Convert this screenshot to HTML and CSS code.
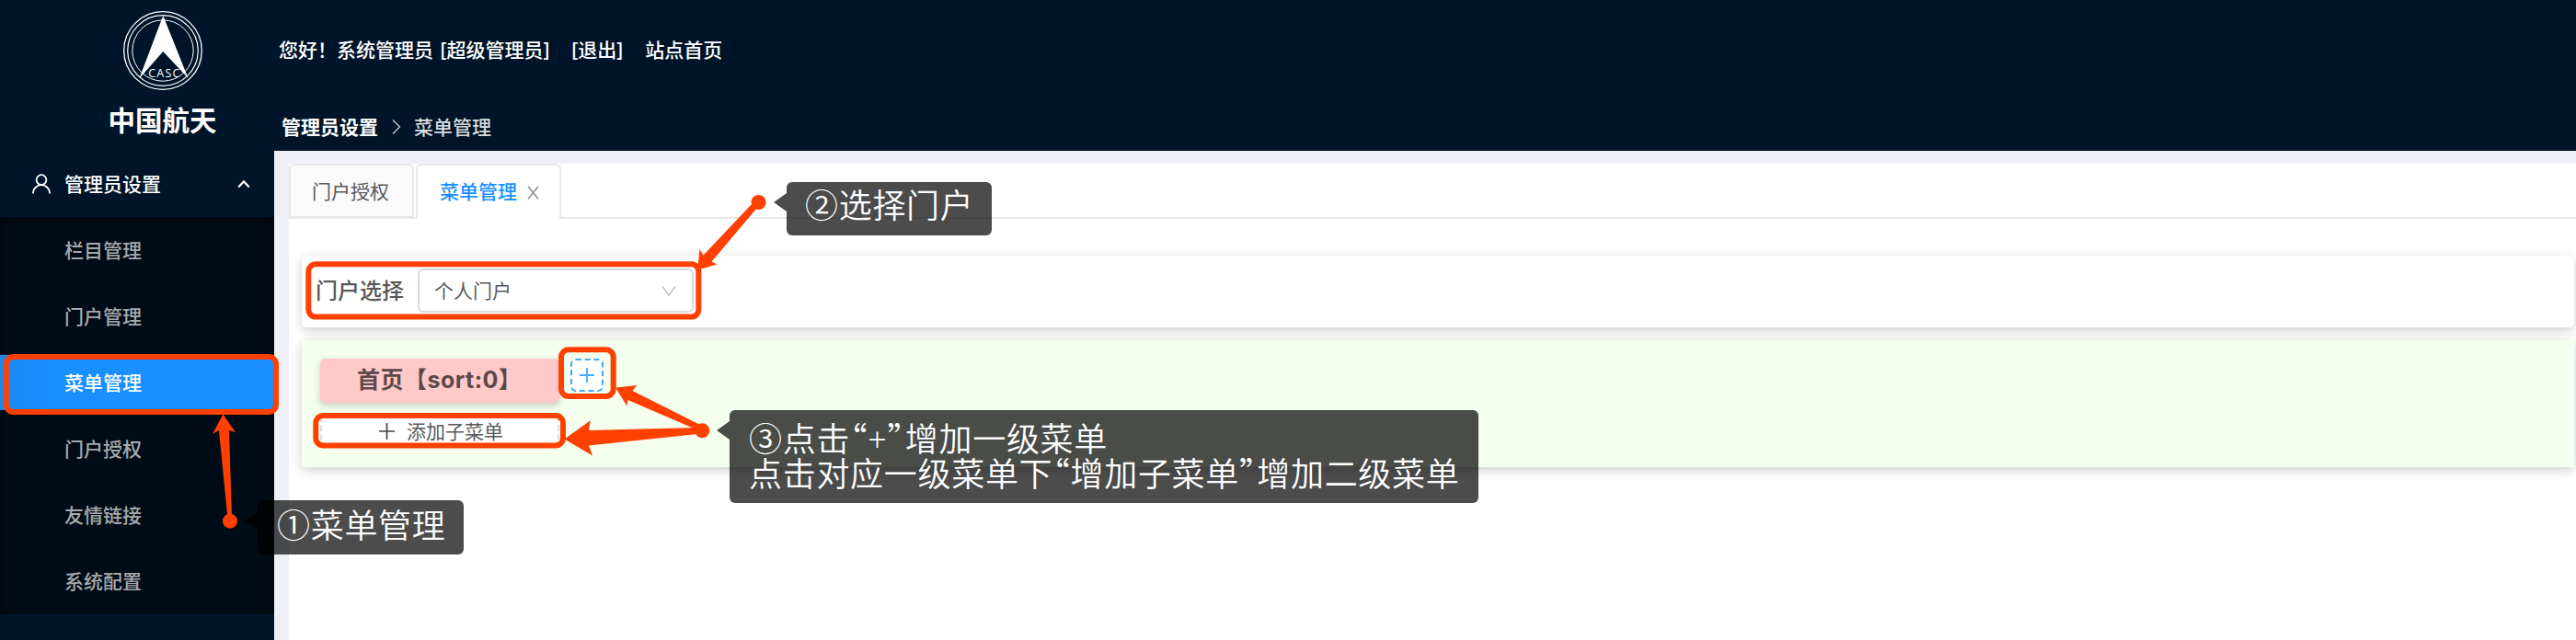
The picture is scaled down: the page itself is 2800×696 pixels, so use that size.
FILE: index.html
```
<!DOCTYPE html>
<html lang="zh-CN">
<head>
<meta charset="utf-8">
<title>菜单管理</title>
<link rel="stylesheet" href="styles.css">
</head>
<body>
<div class="app">
  <aside class="sidebar">
    <div class="brand">
      <svg class="brand-logo" width="88" height="88" viewBox="0 0 88 88">
        <g fill="none" stroke="#fff">
          <circle cx="44" cy="44" r="42.3" stroke-width="1.3"/>
          <circle cx="44" cy="44" r="38.3" stroke-width="1.2"/>
          <circle cx="44" cy="44" r="33.2" stroke-width="1"/>
        </g>
        <path d="M44.3 6 L71.5 74 L44.3 45 L18.3 74.5 Z" fill="#fff"/>
        <text class="brand-code" x="45.3" y="72.7" text-anchor="middle" textLength="34">CASC</text>
      </svg>
      <div class="brand-name">中国航天</div>
    </div>
    <div class="menu-title">
      <svg width="20" height="22" viewBox="0 0 20 22" fill="none" stroke="#fff" stroke-width="1.8"><circle cx="10" cy="6.6" r="5.4"/><path d="M1 21.5v-1.2c.5-4.600 4.400-8.200 9-8.200s8.500 3.600 9 8.200v1.200"/></svg>
      <span>管理员设置</span>
      <svg class="menu-arrow" width="14" height="10" viewBox="0 0 14 10" fill="none" stroke="#fff" stroke-width="2.200"><path d="M1.200 8.500 L7 2.300 L12.800 8.500"/></svg>
    </div>
    <nav class="submenu">
      <a class="item">栏目管理</a>
      <a class="item">门户管理</a>
      <a class="item active">菜单管理</a>
      <a class="item">门户授权</a>
      <a class="item">友情链接</a>
      <a class="item">系统配置</a>
    </nav>
  </aside>
  <main class="main">
    <header class="header">
      <div class="userbar">
        <span>您好！系统管理员 <span class="role">[超级管理员]</span></span>
        <a>[退出]</a>
        <a>站点首页</a>
      </div>
      <div class="breadcrumb">
        <b>管理员设置</b>
        <svg width="10" height="18" viewBox="0 0 10 18" fill="none" stroke="#c4cad0" stroke-width="1.300"><path d="M1 1.500 L8.500 9 L1 16.500"/></svg>
        <span>菜单管理</span>
      </div>
    </header>
    <section class="content">
      <div class="tabs">
        <div class="tab">门户授权</div>
        <div class="tab current">菜单管理
          <svg width="13" height="15" viewBox="0 0 13 15" fill="none" stroke="#8c8c8c" stroke-width="1.500"><path d="M1 .8 L12 14.200 M12 .8 L1 14.200"/></svg>
        </div>
      </div>
      <div class="card filter">
        <label>门户选择</label>
        <div class="select">
          <span>个人门户</span>
          <svg width="16" height="13" viewBox="0 0 16 13" fill="none" stroke="#bfbfbf" stroke-width="1.500"><path d="M1 1.500 L8 11 L15 1.500"/></svg>
        </div>
      </div>
      <div class="card board">
        <div class="column">
          <div class="node">首页【sort:0】</div>
          <div class="add-child">
            <svg width="17" height="18" viewBox="0 0 17 18" fill="none" stroke="#444" stroke-width="1.700"><path d="M8.500 0v18M0 9h17"/></svg>
            <span>添加子菜单</span>
          </div>
        </div>
        <div class="add-root">
          <svg width="16" height="16" viewBox="0 0 16 16" fill="none" stroke="#40a9ff" stroke-width="1.800"><path d="M8 0v16M0 8h16"/></svg>
        </div>
      </div>
    </section>
  </main>

  <svg class="marks" width="2800" height="696" viewBox="0 0 2800 696">
    <path d="M345 454h3v29h-3z M608 454h3v29h-3z" fill="#fff"/>
    <g fill="none" stroke="#ff4000" stroke-width="6">
      <rect x="6.700" y="388" width="293.300" height="60" rx="8"/>
      <rect x="335.300" y="287.300" width="424" height="57.300" rx="8"/>
      <rect x="610" y="380.300" width="56.700" height="50.700" rx="8"/>
      <rect x="343.300" y="452" width="268.700" height="32.500" rx="8"/>
    </g>
    <g fill="#ff4000">
      <path d="M242.500 450.500 L256 470.300 L249 468 L252 562 L247.300 562 L238 468 L231 472 Z"/>
      <circle cx="250" cy="566.700" r="8"/>
      <path d="M758 293.500 L760.500 271 L764.500 277.500 L818 221 L823 226 L773.500 284.500 L779.500 287.500 Z"/>
      <circle cx="824.500" cy="220" r="8"/>
      <path d="M669 421.500 L692.300 419 L687.500 425 L762 462.500 L759 468 L682.500 435 L681.500 441.500 Z"/>
      <path d="M613.500 477.500 L641.700 457.300 L640 468 L758 465 L758 472 L640 484.500 L644 495.500 Z"/>
      <circle cx="763.300" cy="468.300" r="8"/>
    </g>
  </svg>
  <div class="tip tip-menu">①菜单管理</div>
  <div class="tip tip-portal">②选择门户</div>
  <div class="tip tip-add">③点击<q>+</q>增加一级菜单<br>点击对应一级菜单下<q>增加子菜单</q>增加二级菜单</div>
</div>
</body>
</html>
```
FILE: styles.css
```
* { box-sizing: border-box; }
body {
  margin: 0;
  font: 400 21px/30px "Noto Sans", "Noto Sans CJK SC", sans-serif;
  color: #595959;
}
svg { display: block; flex: none; }
.app {
  position: relative;
  display: flex;
  width: 2800px;
  height: 696px;
  overflow: hidden;
  background: #001529;
}

/* Sidebar */
.sidebar { width: 298px; flex: none; color: #fff; }
.brand {
  height: 164px;
  padding: 11px 0 0 56px;
  display: flex;
  flex-direction: column;
  align-items: center;
}
.brand-code { font: 400 12.5px "Open Sans", sans-serif; fill: #fff; }
.brand-name { font-size: 29.500px; font-weight: 700; line-height: 40px; margin: 12px 1px 0 0; }
.menu-title {
  height: 72px;
  display: flex;
  align-items: center;
  padding: 0 26px 0 35px;
  font-weight: 500;
}
.menu-title span { margin-left: 15px; }
.menu-arrow { margin-left: auto; }
.submenu {
  height: 432px;
  padding: 6px 0;
  display: flex;
  flex-direction: column;
  gap: 12px;
  background: #000c17;
  box-shadow: inset 0 3px 12px rgba(0, 0, 0, .45);
}
.item {
  height: 60px;
  line-height: 60px;
  padding-left: 70px;
  font-weight: 500;
  color: #a6aaae;
}
.item.active { color: #fff; background: linear-gradient(90deg, #1a86ed, #1890ff 55px); }

/* Header */
.main { flex: 1; min-width: 0; display: flex; flex-direction: column; }
.header { height: 164px; color: #fff; padding: 39px 0 0 5px; }
.userbar { display: flex; gap: 24px; font-weight: 500; }
.role { margin-left: 2px; }
.breadcrumb { display: flex; align-items: center; margin: 54px 0 0 3px; }
.breadcrumb svg { margin: 0 14px 0 15px; }
.breadcrumb span { color: #d9dcdf; font-weight: 500; }

/* Content */
.content {
  flex: 1;
  background: #fff;
  border: solid #eff0f5;
  border-width: 14px 0 0 16px;
}
.tabs { height: 60px; display: flex; gap: 2px; border-bottom: 2px solid #e8e8e8; }
.tab {
  display: flex;
  align-items: center;
  height: 59px;
  width: 136px;
  padding: 0 0 0 23px;
  border: 2px solid #e8e8e8;
  border-radius: 6px 6px 0 0;
  background: #fafafa;
}
.tab.current {
  height: 60px;
  width: 158px;
  padding: 0 0 2px 24px;
  border-bottom: 0;
  background: #fff;
  color: #1890ff;
  font-weight: 500;
}
.tab svg { margin: 2px 0 0 11px; }
.card {
  margin: 0 2px 14px 14px;
  background: #fff;
  box-shadow: 0 3px 12px rgba(0, 0, 0, .2);
}
.filter {
  height: 78px;
  margin-top: 40px;
  padding: 0 15px 2px;
  border-radius: 5px;
  display: flex;
  align-items: center;
  gap: 15px;
}
.filter label { font-size: 24px; font-weight: 500; }
.select {
  width: 300px;
  height: 48px;
  padding: 0 17px 0 16px;
  border: 2px solid #d9d9d9;
  border-radius: 6px;
  display: flex;
  align-items: center;
  justify-content: space-between;
}
.board {
  height: 138px;
  padding: 20px;
  display: flex;
  align-items: flex-start;
  gap: 12px;
  background: #f4ffee;
}
.column { width: 260px; }
.node {
  height: 48px;
  line-height: 46px;
  padding-left: 40px;
  border-radius: 5px;
  background: #ffc9c9;
  color: #5c4848;
  font-family: Inter, "Noto Sans CJK SC", sans-serif;
  font-size: 25px;
  font-weight: 700;
  letter-spacing: .5px;
  white-space: nowrap;
  box-shadow: 0 3px 9px rgba(0, 0, 0, .2);
}
.add-child {
  height: 36px;
  margin-top: 12px;
  padding: 1px 0 0 62px;
  display: flex;
  align-items: center;
  gap: 13px;
  border: 2px dashed #d9d9d9;
  border-radius: 6px;
  background: #fff;
}
.add-root {
  width: 36px;
  height: 36px;
  display: grid;
  place-items: center;
  border: 2px dashed #40a9ff;
  border-radius: 6px;
  background: #fff;
}

/* Annotations floating over the page */
.marks { position: absolute; left: 0; top: 0; }
.tip {
  position: absolute;
  border-radius: 6px;
  background: rgba(0, 0, 0, .7);
  color: #fff;
  font-size: 36px;
  font-weight: 350;
  line-height: 38px;
  letter-spacing: .7px;
  padding: 9px 0 0 21px;
  white-space: nowrap;
}
.tip q { quotes: none; }
.tip q::before,
.tip q::after { font-family: "Noto Sans CJK SC", sans-serif; line-height: 0; }
.tip q::before { content: "“"; margin-left: -17.5px; }
.tip q::after { content: "”"; margin-right: -17.5px; }
.tip::before {
  content: "";
  position: absolute;
  left: -14px;
  top: 12px;
  border: solid transparent;
  border-width: 10px 14px 10px 0;
  border-right-color: rgba(0, 0, 0, .7);
}
.tip-menu { left: 280px; top: 544px; width: 224px; height: 59px; }
.tip-portal { left: 855px; top: 198px; width: 223px; height: 58px; padding: 7px 0 0 20px; }
.tip-add { left: 793px; top: 446px; width: 814px; height: 101px; padding-top: 13px; }
```
